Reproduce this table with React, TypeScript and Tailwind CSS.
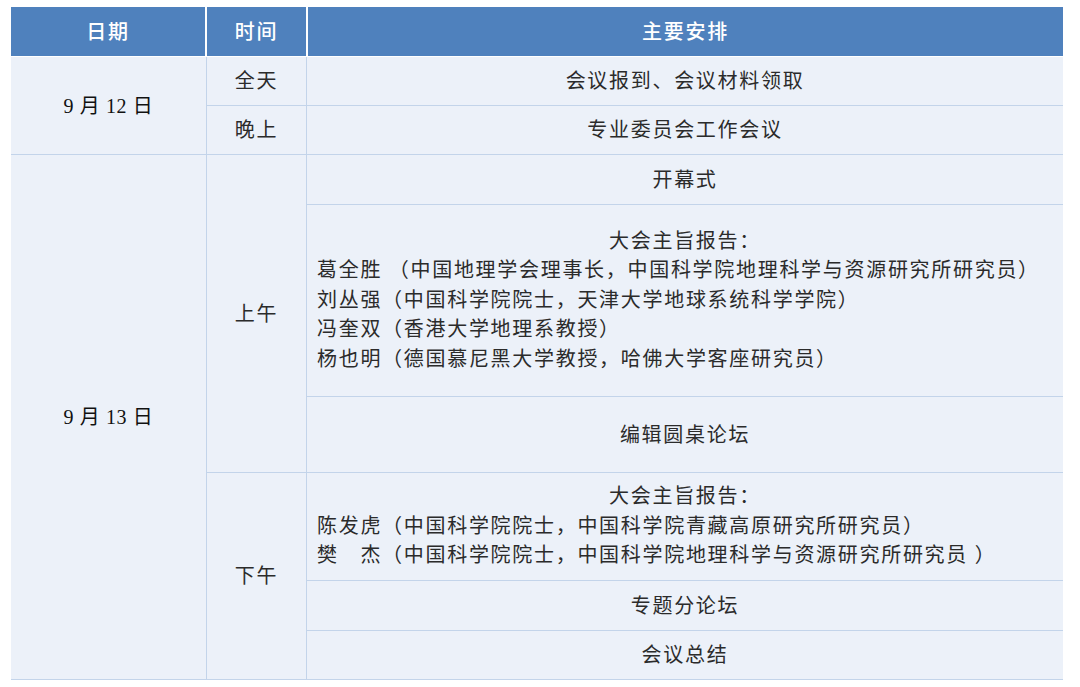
const FONT = "font-['Liberation_Serif','Noto_Sans_CJK_SC',serif]";

function Cell({ children, className = "" }: { children?: React.ReactNode; className?: string }) {
  return (
    <div className={`bg-[#ecf1f9] flex items-center justify-center text-[#2b2b2b] ${className}`}>
      {children}
    </div>
  );
}

function Report({ lines }: { lines: string[] }) {
  return (
    <div className="w-full px-[10px] leading-[29.5px]">
      <div className="text-center">大会主旨报告：</div>
      {lines.map((l) => (
        <div key={l} className="whitespace-pre">{l}</div>
      ))}
    </div>
  );
}

export default function App() {
  return (
    <div className={`w-[1080px] h-[687px] bg-white pt-[7px] pl-[11px] ${FONT} text-[20px] tracking-[1.7px]`}>
      <div className="w-[1052px]">
        {/* Header */}
        <div className="grid grid-cols-[194px_99px_1fr] gap-x-[2px] h-[49px] bg-white">
          {["日期", "时间", "主要安排"].map((h) => (
            <div key={h} className="bg-[#4f81bd] text-white font-medium flex items-center justify-center">
              {h}
            </div>
          ))}
        </div>

        {/* Body */}
        <div
          className="mt-px grid grid-cols-[195px_99px_1fr] grid-rows-[48px_48px_49px_191px_75px_107px_49px_48px] gap-px bg-[#c3d4ea] border-b border-[#c3d4ea]"
        >
          <Cell className="row-span-2 text-[#111] tracking-[0.6px]">9 月 12 日</Cell>
          <Cell>全天</Cell>
          <Cell>会议报到、会议材料领取</Cell>
          <Cell>晚上</Cell>
          <Cell>专业委员会工作会议</Cell>

          <Cell className="row-span-6 text-[#111] tracking-[0.6px]">9 月 13 日</Cell>
          <Cell className="row-span-3">上午</Cell>
          <Cell>开幕式</Cell>
          <Cell className="justify-start">
            <Report
              lines={[
                "葛全胜 （中国地理学会理事长，中国科学院地理科学与资源研究所研究员）",
                "刘丛强（中国科学院院士，天津大学地球系统科学学院）",
                "冯奎双（香港大学地理系教授）",
                "杨也明（德国慕尼黑大学教授，哈佛大学客座研究员）",
              ]}
            />
          </Cell>
          <Cell>编辑圆桌论坛</Cell>

          <Cell className="row-span-3">下午</Cell>
          <Cell className="justify-start">
            <Report
              lines={[
                "陈发虎（中国科学院院士，中国科学院青藏高原研究所研究员）",
                "樊\u3000杰（中国科学院院士，中国科学院地理科学与资源研究所研究员 ）",
              ]}
            />
          </Cell>
          <Cell>专题分论坛</Cell>
          <Cell>会议总结</Cell>
        </div>
      </div>
    </div>
  );
}
